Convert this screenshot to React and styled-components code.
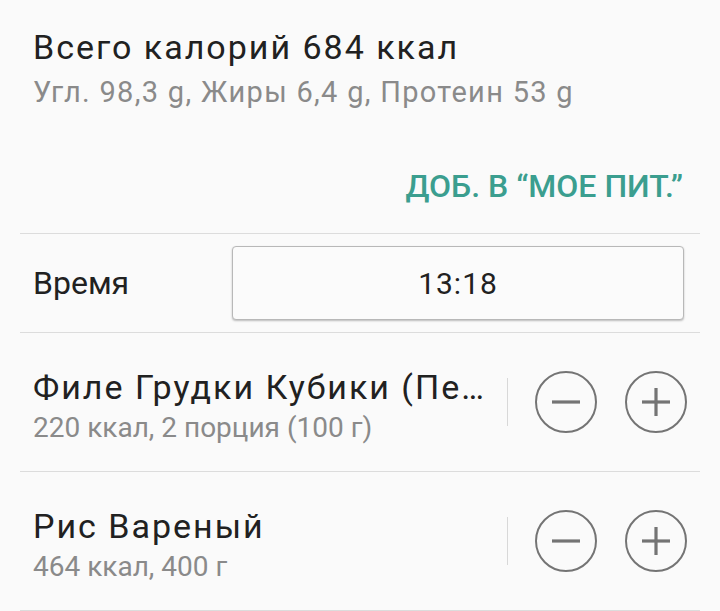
import styled, { createGlobalStyle } from "styled-components";

const GlobalStyle = createGlobalStyle`
  html, body {
    margin: 0;
    padding: 0;
    background: #fafafa;
  }
  body {
    font-family: Roboto, "Noto Sans", "Liberation Sans", sans-serif;
    color: #212121;
  }
`;

const Page = styled.div`
  width: 720px;
  height: 611px;
  overflow: hidden;
  background: #fafafa;
`;

const Summary = styled.div`
  padding: 27px 33px 0;
  display: flex;
  flex-direction: column;
  gap: 8px;
`;

const Title = styled.div`
  font-size: 34px;
  line-height: 40px;
  letter-spacing: 2px;
  color: #212121;
  white-space: nowrap;
  overflow: hidden;
  text-overflow: ellipsis;
`;

const Sub = styled.div`
  font-size: ${(p) => (p.$wide ? 29 : 28)}px;
  line-height: 34px;
  letter-spacing: ${(p) => (p.$wide ? 1.3 : 0)}px;
  color: #8a8a8a;
  white-space: nowrap;
`;

const Actions = styled.div`
  display: flex;
  justify-content: flex-end;
  padding: 58px 37px 28px;
`;

const TextButton = styled.button`
  border: 0;
  background: none;
  padding: 0;
  font-family: inherit;
  font-size: 32px;
  line-height: 38px;
  font-weight: 500;
  color: #3b9e8f;
  cursor: pointer;
`;

const List = styled.div`
  margin: 0 20px;
  border-top: 1px solid #dcdcdc;
`;

const Row = styled.div`
  display: flex;
  align-items: center;
  height: ${(p) => p.$h}px;
  padding: 0 13px;
  border-bottom: 1px solid #dcdcdc;
`;

const Label = styled.div`
  width: 199px;
  font-size: 32px;
  line-height: 38px;
`;

const TimeBox = styled.div`
  flex: 1;
  height: 72px;
  display: flex;
  align-items: center;
  justify-content: center;
  border: 1px solid #b8b8b8;
  border-radius: 4px;
  background: #fbfbfb;
  box-shadow: 0 1px 2px rgba(0, 0, 0, 0.25);
  font-size: 30px;
  letter-spacing: 1px;
  color: #212121;
  margin-right: 3px;
`;

const FoodText = styled.div`
  flex: 1;
  min-width: 0;
  display: flex;
  flex-direction: column;
  gap: 4px;
  padding-top: 8px;
`;

const Controls = styled.div`
  display: flex;
  align-items: center;
  gap: 28px;
  padding-left: 18px;
`;

const Sep = styled.div`
  width: 1px;
  height: 48px;
  background: #d8d8d8;
  margin-right: -1px;
`;

const Round = styled.button`
  width: 62px;
  height: 62px;
  padding: 0;
  border: 0;
  background: none;
  display: flex;
  cursor: pointer;
`;

const Stepper = ({ plus }) => (
  <Round>
    <svg width="62" height="62" viewBox="0 0 62 62">
      <circle cx="31" cy="31" r="30" fill="none" stroke="#747474" strokeWidth="2" />
      <path d="M17 31h28" stroke="#747474" strokeWidth="3.2" />
      {plus && <path d="M31 17v28" stroke="#747474" strokeWidth="3.2" />}
    </svg>
  </Round>
);

const foods = [
  { name: "Филе Грудки Кубики (Петелинка)", info: "220 ккал, 2 порция (100 г)" },
  { name: "Рис Вареный", info: "464 ккал, 400 г" },
];

const App = () => (
  <Page>
    <GlobalStyle />
    <Summary>
      <Title>Всего калорий 684 ккал</Title>
      <Sub $wide>Угл. 98,3 g, Жиры 6,4 g, Протеин 53 g</Sub>
    </Summary>
    <Actions>
      <TextButton>ДОБ. В “МОЕ ПИТ.”</TextButton>
    </Actions>
    <List>
      <Row $h={98}>
        <Label>Время</Label>
        <TimeBox>13:18</TimeBox>
      </Row>
      {foods.map((f) => (
        <Row $h={138} key={f.name}>
          <FoodText>
            <Title>{f.name}</Title>
            <Sub>{f.info}</Sub>
          </FoodText>
          <Controls>
            <Sep />
            <Stepper />
            <Stepper plus />
          </Controls>
        </Row>
      ))}
    </List>
  </Page>
);

export default App;
